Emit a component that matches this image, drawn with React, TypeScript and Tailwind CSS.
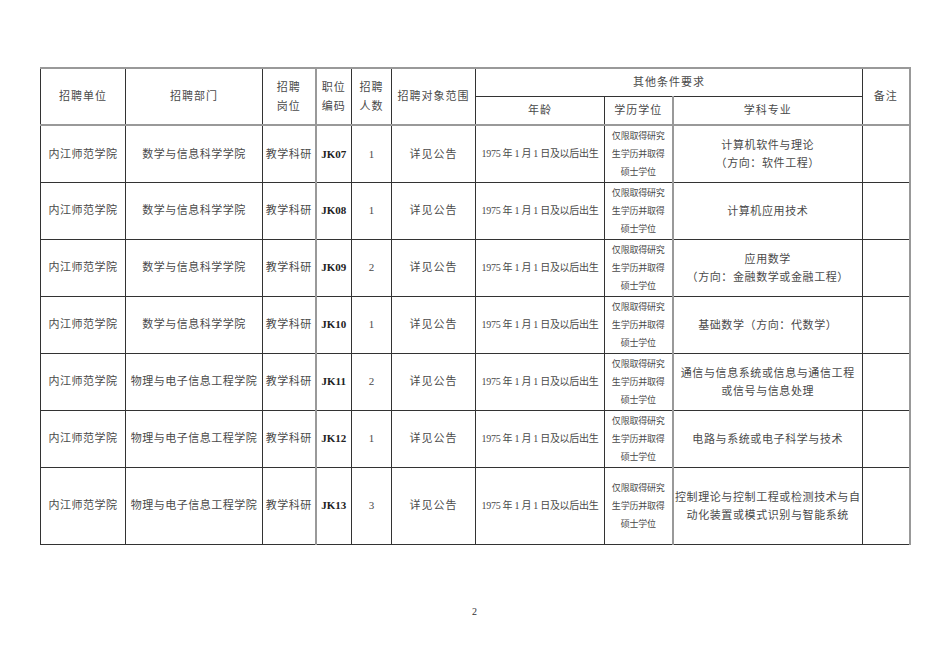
import React from 'react';

interface Post {
  dept: string;
  code: string;
  count: string;
  major: string[];
  tall?: boolean;
}

const posts: Post[] = [
  { dept: '数学与信息科学学院', code: 'JK07', count: '1', major: ['计算机软件与理论', '（方向：软件工程）'] },
  { dept: '数学与信息科学学院', code: 'JK08', count: '1', major: ['计算机应用技术'] },
  { dept: '数学与信息科学学院', code: 'JK09', count: '2', major: ['应用数学', '（方向：金融数学或金融工程）'] },
  { dept: '数学与信息科学学院', code: 'JK10', count: '1', major: ['基础数学（方向：代数学）'] },
  { dept: '物理与电子信息工程学院', code: 'JK11', count: '2', major: ['通信与信息系统或信息与通信工程', '或信号与信息处理'] },
  { dept: '物理与电子信息工程学院', code: 'JK12', count: '1', major: ['电路与系统或电子科学与技术'] },
  { dept: '物理与电子信息工程学院', code: 'JK13', count: '3', major: ['控制理论与控制工程或检测技术与自', '动化装置或模式识别与智能系统'], tall: true },
];

const font = 'font-["Liberation_Serif","Noto_Sans_CJK_SC",serif]';
const cell = 'border border-[#333] text-center align-middle p-0';

export default function App() {
  return (
    <div className={`w-[950px] h-[672px] bg-white text-[#4a4a4a] ${font} pt-[67px] pl-[40px]`}>
      <table className="w-[869px] table-fixed border-collapse border-t-2 border-t-[#999] border-r-2 border-r-[#999]">
        <colgroup>
          <col className="w-[85px]" />
          <col className="w-[137px]" />
          <col className="w-[53px]" />
          <col className="w-[36px]" />
          <col className="w-[40px]" />
          <col className="w-[84px]" />
          <col className="w-[129px]" />
          <col className="w-[68px]" />
          <col className="w-[190px]" />
          <col className="w-[47px]" />
        </colgroup>
        <thead>
          <tr className="h-[28px] text-[11px] tracking-[1px]">
            <th rowSpan={2} className={`${cell} font-normal`}>招聘单位</th>
            <th rowSpan={2} className={`${cell} font-normal`}>招聘部门</th>
            <th rowSpan={2} className={`${cell} font-normal leading-[19px]`}>招聘<br />岗位</th>
            <th rowSpan={2} className={`${cell} font-normal leading-[19px] border-l-2 border-l-[#999]`}>职位<br />编码</th>
            <th rowSpan={2} className={`${cell} font-normal leading-[19px]`}>招聘<br />人数</th>
            <th rowSpan={2} className={`${cell} font-normal`}>招聘对象范围</th>
            <th colSpan={3} className={`${cell} font-normal`}>其他条件要求</th>
            <th rowSpan={2} className={`${cell} font-normal`}>备注</th>
          </tr>
          <tr className="h-[29px] text-[11px] tracking-[1px] border-b-2 border-b-[#999]">
            <th className={`${cell} font-normal`}>年龄</th>
            <th className={`${cell} font-normal`}>学历学位</th>
            <th className={`${cell} font-normal border-l-2 border-l-[#999]`}>学科专业</th>
          </tr>
        </thead>
        <tbody>
          {posts.map((p) => (
            <tr key={p.code} className={p.tall ? 'h-[77px]' : 'h-[57px]'}>
              <td className={`${cell} text-[11px] tracking-[0.5px]`}>内江师范学院</td>
              <td className={`${cell} text-[11px] tracking-[0.5px]`}>{p.dept}</td>
              <td className={`${cell} text-[11px] tracking-[0.5px]`}>教学科研</td>
              <td className={`${cell} text-[11px] font-bold text-[#222] border-l-2 border-l-[#999]`}>{p.code}</td>
              <td className={`${cell} text-[11px]`}>{p.count}</td>
              <td className={`${cell} text-[11px] tracking-[1px]`}>详见公告</td>
              <td className={`${cell} text-[10px] tracking-[-0.3px] whitespace-nowrap`}>1975 年 1 月 1 日及以后出生</td>
              <td className={`${cell} text-[9px] leading-[18px] tracking-[-0.2px]`}>
                仅限取得研究<br />生学历并取得<br />硕士学位
              </td>
              <td className={`${cell} text-[11px] leading-[18px] tracking-[0.6px] border-l-2 border-l-[#999]`}>
                {p.major.map((m, i) => (
                  <div key={i}>{m}</div>
                ))}
              </td>
              <td className={cell}></td>
            </tr>
          ))}
        </tbody>
      </table>
      <div className="w-[869px] text-center text-[10px] mt-[59px] text-[#333]">2</div>
    </div>
  );
}
